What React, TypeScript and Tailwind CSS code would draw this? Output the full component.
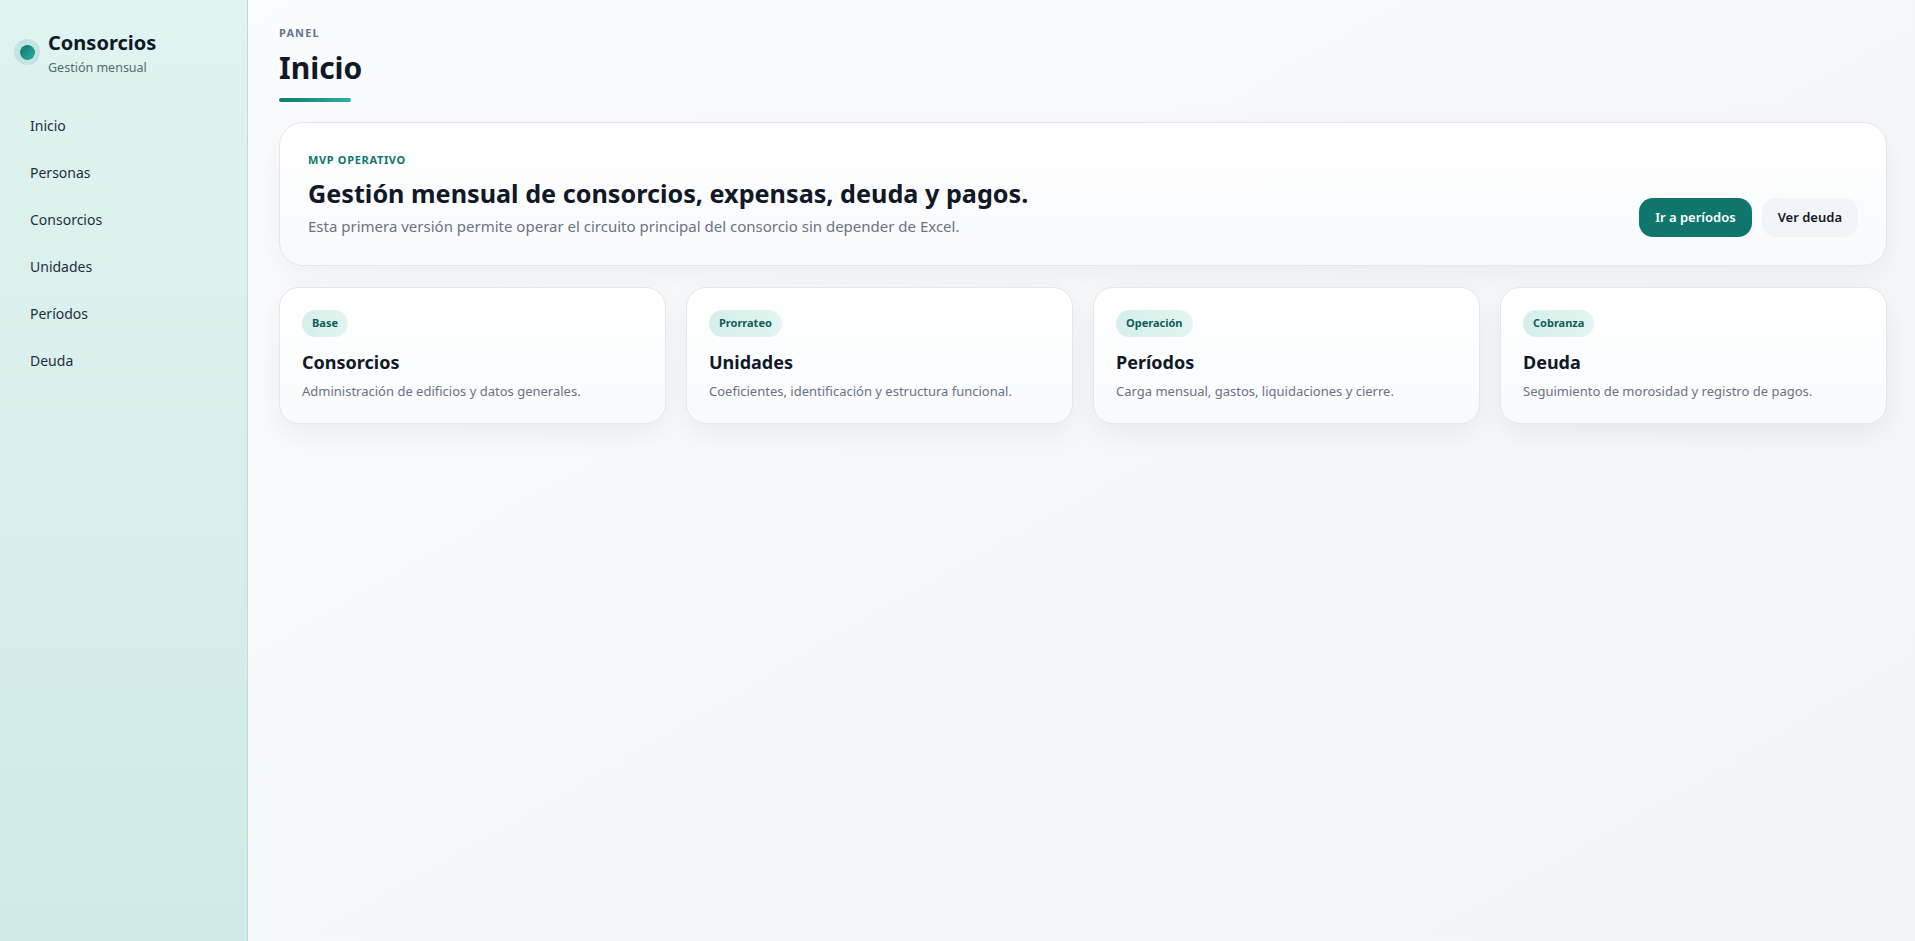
import React from "react";

const nav = ["Inicio", "Personas", "Consorcios", "Unidades", "Períodos", "Deuda"];

const modules = [
  { tag: "Base", title: "Consorcios", text: "Administración de edificios y datos generales." },
  { tag: "Prorrateo", title: "Unidades", text: "Coeficientes, identificación y estructura funcional." },
  { tag: "Operación", title: "Períodos", text: "Carga mensual, gastos, liquidaciones y cierre." },
  { tag: "Cobranza", title: "Deuda", text: "Seguimiento de morosidad y registro de pagos." },
];

export default function App() {
  return (
    <div className="flex min-h-screen font-['Segoe_UI','Noto_Sans',sans-serif] text-[#111827]">
      <aside className="flex w-[248px] shrink-0 flex-col border-r border-[#b5dfda] bg-gradient-to-b from-[#e0f4f1] to-[#cfeae8] px-[14px] pt-[29px]">
        <div className="flex items-start gap-[8px]">
          <div className="mt-[10px] flex h-[26px] w-[26px] items-center justify-center rounded-full bg-[#c3e4e1]">
            <div className="h-[15px] w-[15px] rounded-full bg-gradient-to-br from-[#0f766e] to-[#2aaea3]" />
          </div>
          <div>
            <div className="text-[20px] leading-[28px] font-bold text-[#111827]">Consorcios</div>
            <div className="mt-[3px] text-[12.5px] leading-[16px] text-[#4d6f6c]">Gestión mensual</div>
          </div>
        </div>
        <nav className="mt-[30px] flex flex-col gap-[7px]">
          {nav.map((n) => (
            <a key={n} className="block rounded-[10px] px-[16px] py-[10px] text-[14px] leading-[20px] text-[#1f2f3a]">
              {n}
            </a>
          ))}
        </nav>
      </aside>

      <main className="flex-1 bg-gradient-to-br from-[#fbfcfd] to-[#f1f3f7] pl-[31px] pr-[28px] pt-[26px]">
        <div className="text-[11px] leading-[14px] font-bold tracking-[0.1em] text-[#64748b]">PANEL</div>
        <h1 className="mt-[8px] text-[30px] leading-[40px] font-bold text-[#111827]">Inicio</h1>
        <div className="mt-[10px] h-[4px] w-[72px] rounded-full bg-gradient-to-r from-[#0f7a6f] to-[#2bb0a2]" />

        <section className="mt-[20px] flex items-end justify-between rounded-[24px] border border-[#e3e6ee] bg-gradient-to-b from-white to-[#f8fafc] px-[28px] pt-[30px] pb-[28px] shadow-[0_10px_30px_rgba(15,23,42,0.05)]">
          <div>
            <div className="text-[11px] leading-[14px] font-bold tracking-[0.06em] text-[#0f766e]">MVP OPERATIVO</div>
            <h2 className="mt-[10px] text-[25.2px] leading-[32px] font-bold text-[#111827]">
              Gestión mensual de consorcios, expensas, deuda y pagos.
            </h2>
            <p className="mt-[6px] text-[15px] leading-[22px] text-[#6b7280]">
              Esta primera versión permite operar el circuito principal del consorcio sin depender de Excel.
            </p>
          </div>
          <div className="flex gap-[10px]">
            <button className="h-[39px] rounded-[14px] bg-[#0f766e] px-[16px] text-[13px] font-semibold text-white">
              Ir a períodos
            </button>
            <button className="h-[39px] rounded-[14px] bg-[#f1f4f8] px-[16px] text-[13px] font-semibold text-[#111827]">
              Ver deuda
            </button>
          </div>
        </section>

        <div className="mt-[21px] grid grid-cols-4 gap-[20px]">
          {modules.map((m) => (
            <div
              key={m.title}
              className="rounded-[20px] border border-[#e3e6ee] bg-gradient-to-b from-white to-[#f8fbfd] px-[22px] pt-[21px] pb-[23px] shadow-[0_10px_28px_rgba(15,23,42,0.06)]"
            >
              <span className="inline-flex h-[27px] items-center rounded-full bg-gradient-to-r from-[#d4efec] to-[#e4f4f2] px-[10px] text-[11px] font-bold text-[#115e59]">
                {m.tag}
              </span>
              <h3 className="mt-[12px] text-[18px] leading-[26px] font-bold text-[#111827]">{m.title}</h3>
              <p className="mt-[7px] text-[13px] leading-[18px] text-[#6b7280]">{m.text}</p>
            </div>
          ))}
        </div>
      </main>
    </div>
  );
}
